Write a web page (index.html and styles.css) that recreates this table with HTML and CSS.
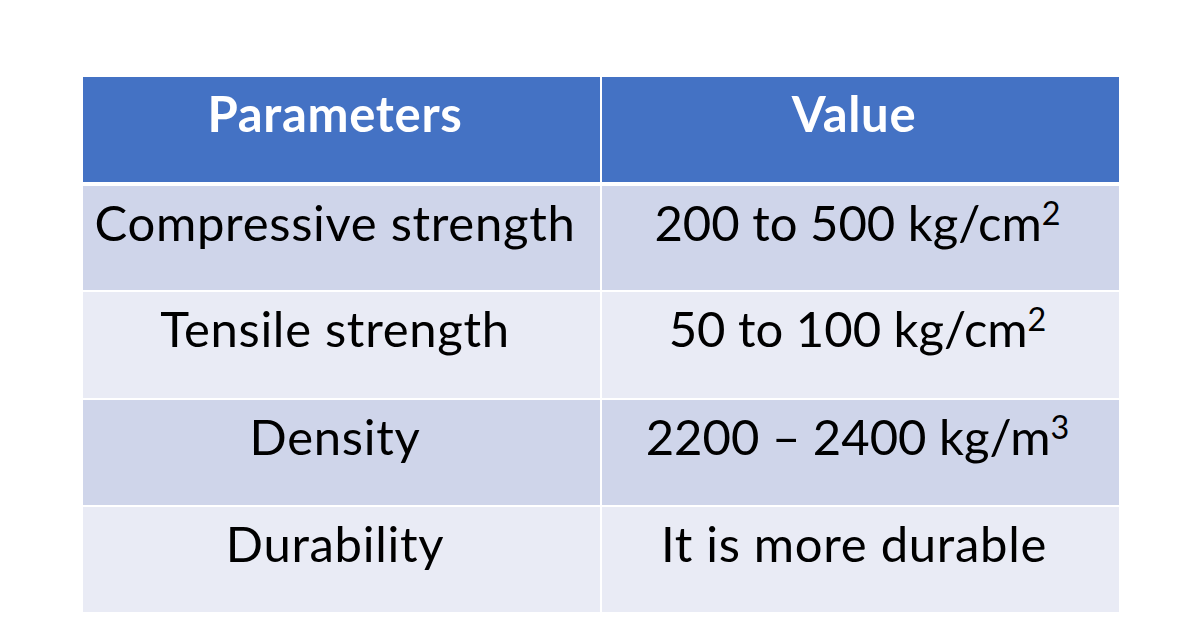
FILE: index.html
```html
<!DOCTYPE html>
<html lang="en">
<head>
<meta charset="utf-8">
<title>Concrete parameters</title>
<link rel="stylesheet" href="styles.css">
</head>
<body>
<div class="slide">
  <div class="table">
    <div class="head-row">
      <div class="cell head">Parameters</div>
      <div class="cell head">Value</div>
    </div>
    <div class="body-rows">
      <div class="row r1 odd">
        <div class="cell">Compressive strength</div>
        <div class="cell num">200 to 500 kg/cm<sup>2</sup></div>
      </div>
      <div class="row r2 even">
        <div class="cell">Tensile strength</div>
        <div class="cell num">50 to 100 kg/cm<sup>2</sup></div>
      </div>
      <div class="row r3 odd">
        <div class="cell">Density</div>
        <div class="cell num">2200 – 2400 kg/m<sup>3</sup></div>
      </div>
      <div class="row r4 even">
        <div class="cell">Durability</div>
        <div class="cell">It is more durable</div>
      </div>
    </div>
  </div>
</div>
</body>
</html>
```

FILE: styles.css
```css
html, body {
  margin: 0;
  padding: 0;
  background: #ffffff;
}

.slide {
  width: 1200px;
  height: 630px;
  padding-top: 77px;
  padding-left: 83px;
  box-sizing: border-box;
}

.table {
  width: 1036px;
  font-family: "Lato", "Liberation Sans", sans-serif;
  font-size: 49px;
  line-height: 1.2;
  letter-spacing: 0.7px;
  color: #000000;
}

.head-row,
.row {
  display: grid;
  grid-template-columns: 517px 517px;
  column-gap: 2px;
}

.head-row {
  height: 105px;
  margin-bottom: 4px;
}

.body-rows {
  display: flex;
  flex-direction: column;
  gap: 2px;
}

.r1 { height: 104px; }
.r2 { height: 106px; }
.r3 { height: 105px; }
.r4 { height: 105px; }

.cell {
  text-align: center;
  padding: 7px 13px 0 0;
  white-space: nowrap;
}

.num {
  letter-spacing: 0;
  padding-right: 6px;
}

.head {
  background: #4472c4;
  color: #ffffff;
  font-weight: 700;
  padding-top: 7px;
}

.odd .cell { background: #cfd5ea; }
.even .cell { background: #e9ebf5; }

sup {
  font-size: 0.66em;
  vertical-align: 0.5em;
  line-height: 0;
  letter-spacing: 0;
}
```
